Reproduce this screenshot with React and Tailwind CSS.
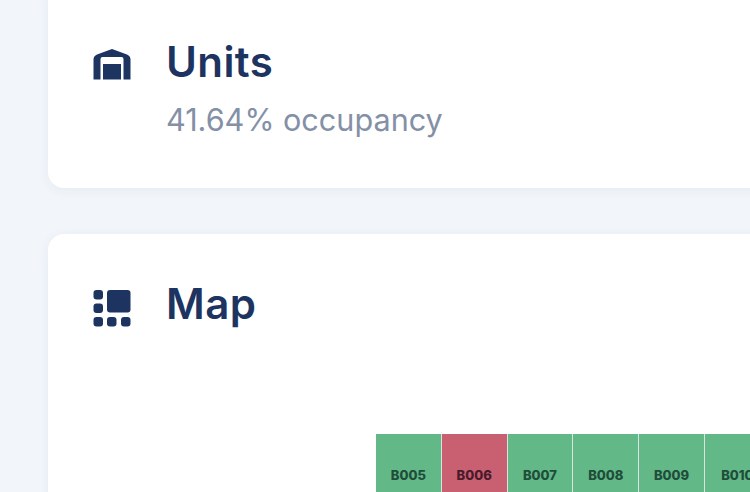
import React from "react";

const UNITS = [
    { id: "B005", taken: false },
    { id: "B006", taken: true },
    { id: "B007", taken: false },
    { id: "B008", taken: false },
    { id: "B009", taken: false },
    { id: "B010", taken: false },
];

const WarehouseIcon = () => (
    <svg width="38" height="31" viewBox="0 0 38 31" className="shrink-0 text-[#1d3461]" fill="currentColor">
        <path d="M19 0 L34 5.5 Q37.5 7 37.5 10.5 V30.5 H30.5 V10 Q30.5 8 28.5 8 H9.5 Q7.5 8 7.5 10 V30.5 H0.5 V10.5 Q0.5 7 4 5.5 Z" />
        <rect x="10" y="15" width="18" height="15.5" />
    </svg>
);

const MapIcon = () => (
    <svg width="38" height="37" viewBox="0 0 38 37" className="shrink-0 text-[#1d3461]" fill="currentColor">
        <rect x="14" y="0" width="23.5" height="22.5" rx="3" />
        <rect x="0.5" y="0" width="9.5" height="9.5" rx="3" />
        <rect x="0.5" y="13.5" width="9.5" height="9.5" rx="3" />
        <rect x="0.5" y="27" width="9.5" height="9.5" rx="3" />
        <rect x="14" y="27" width="9.5" height="9.5" rx="3" />
        <rect x="28" y="27" width="9.5" height="9.5" rx="3" />
    </svg>
);

export default function App() {
    return (
        <div className="h-[492px] w-[750px] overflow-hidden bg-[#f2f6fb] pl-12 font-['Inter',sans-serif]">
            {/* Units card, top is scrolled out */}
            <section className="-mt-5 h-[208px] w-[740px] rounded-2xl bg-white pl-[45px] pt-[54px] shadow-[0_2px_12px_rgba(30,50,90,0.06)]">
                <div className="flex items-start gap-[36px]">
                    <div className="pt-[15px]">
                        <WarehouseIcon />
                    </div>
                    <div className="-ml-px">
                        <h2 className="text-[42px] font-semibold leading-[56px] tracking-[0.4px] text-[#1d3461]">Units</h2>
                        <p className="mt-[10px] text-[30.6px] leading-[40px] text-[#8490a6]">41.64% occupancy</p>
                    </div>
                </div>
            </section>

            {/* Map card */}
            <section className="mt-[46px] h-[300px] w-[740px] rounded-2xl bg-white pl-[45px] pt-[42px] shadow-[0_2px_12px_rgba(30,50,90,0.06)]">
                <div className="flex items-start gap-[36px]">
                    <div className="pt-[14px]">
                        <MapIcon />
                    </div>
                    <h2 className="-ml-px text-[42px] font-semibold leading-[56px] tracking-[0.4px] text-[#1d3461]">Map</h2>
                </div>
                <div className="ml-[283px] mt-[102px] flex gap-px bg-[#d9e4de]">
                    {UNITS.map((unit) => (
                        <div
                            key={unit.id}
                            className={
                                "flex h-[80px] w-[64.8px] shrink-0 justify-center pt-[32px] text-[13px] font-extrabold leading-[18px] " +
                                (unit.taken ? "bg-[#c96072] text-[#4a1a2a]" : "bg-[#62b987] text-[#1f4d3a]")
                            }
                        >
                            {unit.id}
                        </div>
                    ))}
                </div>
            </section>
        </div>
    );
}
